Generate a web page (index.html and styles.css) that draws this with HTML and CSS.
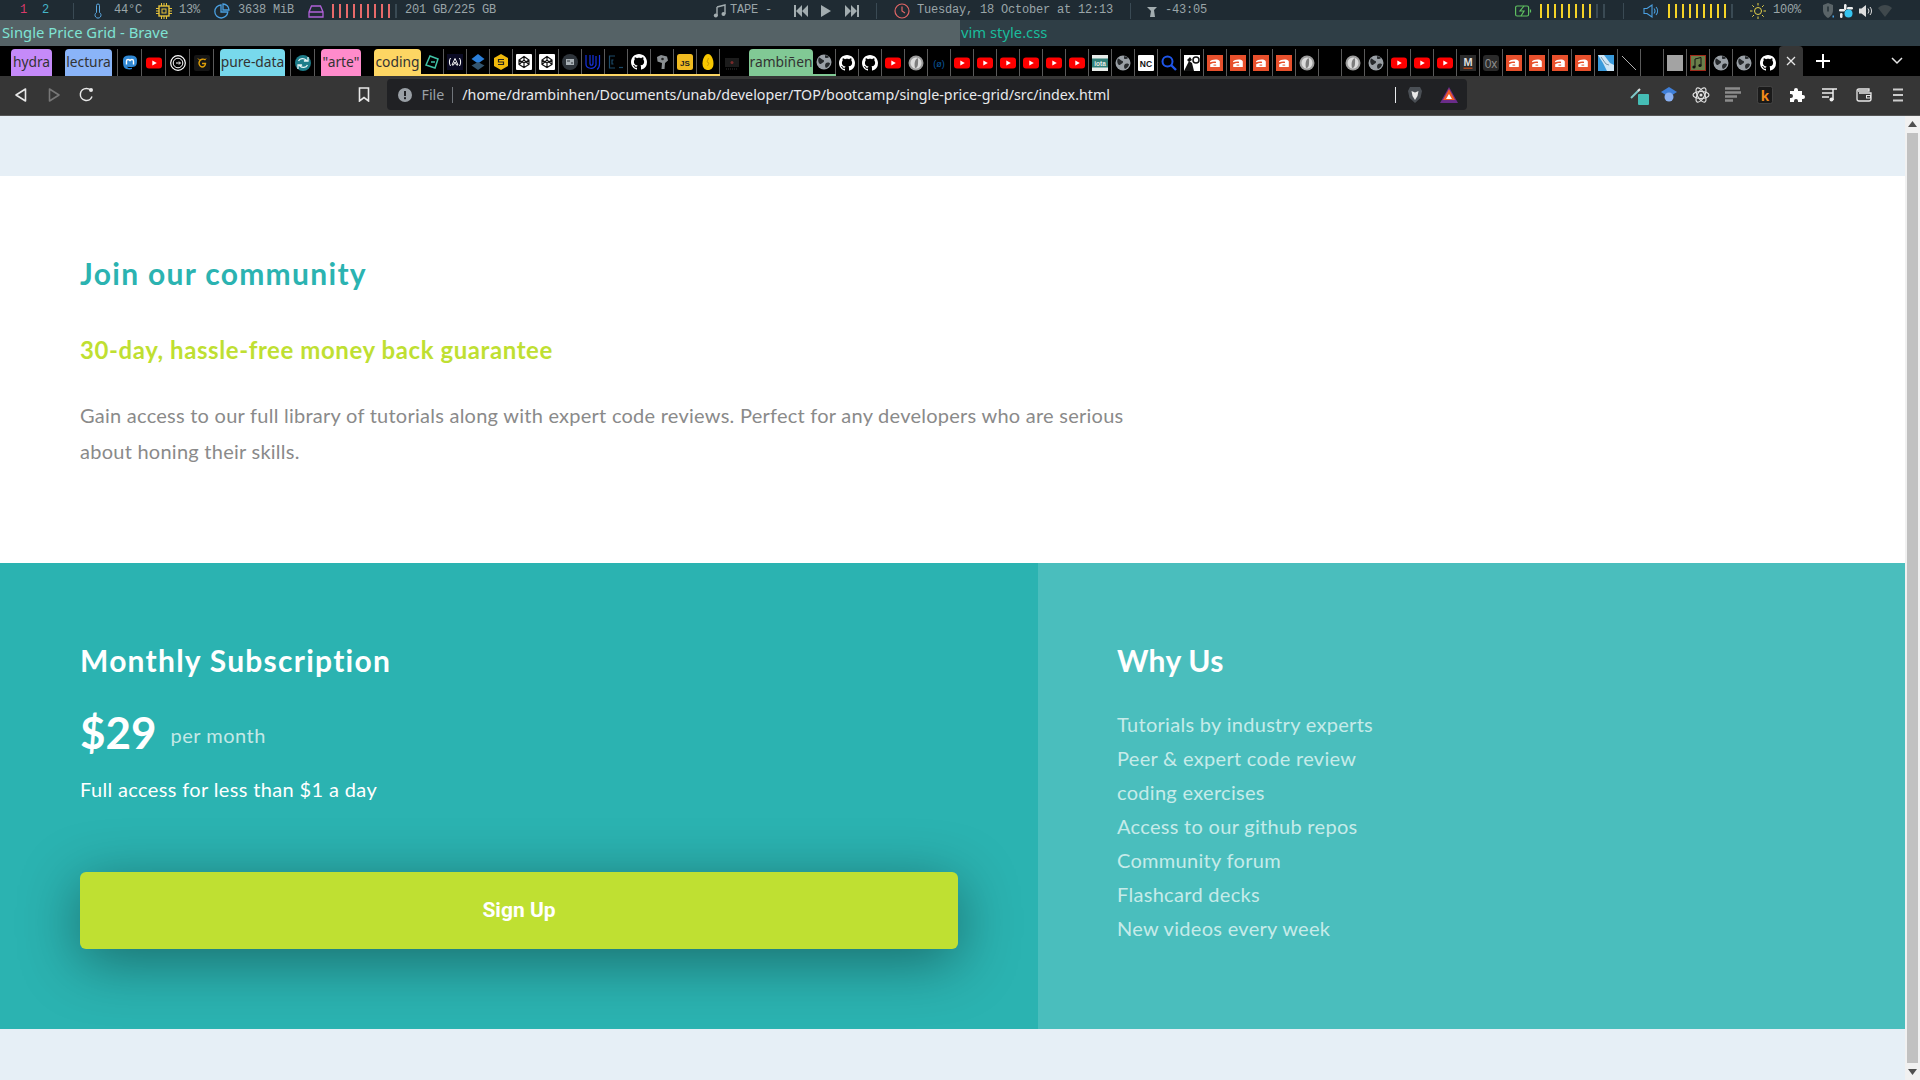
FILE: index.html
```html
<!DOCTYPE html>
<html>

<head>
    <meta charset="UTF-8">
    <title>Single Price Grid - Brave</title>
    <link rel="stylesheet" href="styles.css">
</head>

<body>

    <!-- icons used by the pinned tabs -->
    <svg class="defs" width="0" height="0">
        <symbol id="yt" viewBox="0 0 16 16"><rect y="2.5" width="16" height="11" rx="3" fill="#f00"/><path d="M6.3 5.5v5L10.8 8z" fill="#fff"/></symbol>
        <symbol id="gh" viewBox="0 0 16 16"><path fill="#fff" d="M8 0C3.58 0 0 3.58 0 8c0 3.54 2.29 6.53 5.47 7.59.4.07.55-.17.55-.38 0-.19-.01-.82-.01-1.49-2.01.37-2.53-.49-2.69-.94-.09-.23-.48-.94-.82-1.13-.28-.15-.68-.52-.01-.53.63-.01 1.08.58 1.23.82.72 1.21 1.87.87 2.33.66.07-.52.28-.87.51-1.07-1.78-.2-3.64-.89-3.64-3.95 0-.87.31-1.59.82-2.15-.08-.2-.36-1.02.08-2.12 0 0 .67-.21 2.2.82.64-.18 1.32-.27 2-.27.68 0 1.36.09 2 .27 1.53-1.04 2.2-.82 2.2-.82.44 1.1.16 1.92.08 2.12.51.56.82 1.27.82 2.15 0 3.07-1.87 3.75-3.65 3.95.29.25.54.73.54 1.48 0 1.07-.01 1.93-.01 2.2 0 .21.15.46.55.38A8.013 8.013 0 0016 8c0-4.42-3.58-8-8-8z"/></symbol>
        <symbol id="globe" viewBox="0 0 16 16"><circle cx="8" cy="8" r="7.5" fill="#9aa0a6"/><path d="M3 3.5c2 .5 2.500 2 4.500 2.500 1 .5.500 2-.5 2.500-1.500.5-2 2-3 1.500-1.500-1-2.500-4-1-6.500zM10 9c1.500-1 3.500-.5 4 .5-.5 2-2 3.500-4 4.500-1-1-1.500-3.500 0-5zM9 1.500c1.500-.5 3 .5 4 1.500-1 1-3 1.500-4 .5z" fill="#26292c"/></symbol>
        <symbol id="coin" viewBox="0 0 16 16"><circle cx="8" cy="8" r="7.500" fill="#9c9c9c"/><circle cx="8" cy="8" r="5.500" fill="#dcdcdc"/><path d="M9.500 3C7 4.500 6 8 7 13c2 0 3-2 3-4.500S10.500 4.500 9.500 3z" fill="#7d7d7d"/></symbol>
        <symbol id="brave-a" viewBox="0 0 16 16"><rect width="16" height="16" fill="#e8502c"/><path d="M3 6.500C4 4 12.500 3.500 12.800 6.500V12H3.200V9.300C5 8 7 7.800 9 8V6.700c-2-.3-4 0-6 .6z" fill="#fff"/><rect x="6.500" y="9.600" width="2.700" height="1" fill="#e8502c"/></symbol>
        <symbol id="codepen" viewBox="0 0 16 16"><rect width="16" height="16" rx="1" fill="#fff"/><path d="M8 2.500l5 3.500v4.500l-5 3-5-3V6zM3 6l5 3 5-3M8 2.500V6M8 9v4.500M3 10.500L8 6l5 4.500" fill="none" stroke="#111" stroke-width="1.200"/></symbol>
        <symbol id="blank-chip" viewBox="0 0 16 16"><rect x="1" y="3" width="14" height="9" fill="#1c1c1c"/><circle cx="8" cy="7.500" r="1.500" fill="#7a2a2a"/><path d="M2 14h12" stroke="#333" stroke-dasharray="1 1"/></symbol>
    </svg>

    <div class="statusbar">
        <div class="st-group st-left">
            <span class="ws ws-red">1</span>
            <span class="ws ws-blue">2</span>
            <i class="st-sep st-sep-left"></i>
            <span class="pair pair-temp">
                <svg width="10" height="16" viewBox="0 0 10 16"><path d="M3.500 9.500V2.500a1.500 1.500 0 013 0v7a3 3 0 11-3 0z" fill="none" stroke="#5aa7e0"/></svg>
                <span>44°C</span>
            </span>
            <span class="pair pair-cpu">
                <svg width="16" height="16" viewBox="0 0 16 16"><rect x="3" y="3" width="10" height="10" fill="none" stroke="#e5c23a" stroke-width="1.400"/><rect x="6" y="6" width="4" height="4" fill="none" stroke="#e5c23a"/><path d="M5.500 0v3M8 0v3M10.500 0v3M5.500 13v3M8 13v3M10.500 13v3M0 5.500h3M0 8h3M0 10.500h3M13 5.500h3M13 8h3M13 10.500h3" stroke="#e5c23a"/></svg>
                <span>13%</span>
            </span>
            <span class="pair pair-mem">
                <svg width="16" height="16" viewBox="0 0 16 16"><path d="M7 2a6.500 6.500 0 106.800 7H7z" fill="none" stroke="#4a9fe0" stroke-width="1.300"/><path d="M9 1a6 6 0 016 6H9z" fill="none" stroke="#4a9fe0" stroke-width="1.300"/></svg>
                <span>3638 MiB</span>
            </span>
            <span class="pair pair-disk">
                <svg width="16" height="14" viewBox="0 0 16 14"><path d="M1 8l2.500-6h9L15 8v5H1zM1 8h14" fill="none" stroke="#b061d8" stroke-width="1.300"/></svg>
                <span class="bars bars-disk"><i></i><i></i><i></i><i></i><i></i><i></i><i></i><i></i><i></i><i class="off"></i></span>
                <span class="disk-label">201 GB/225 GB</span>
            </span>
        </div>
        <div class="st-group st-mid">
            <svg width="14" height="14" viewBox="0 0 14 14"><path d="M4 3l8-2v9M4 3v9" stroke="#a3adb0" stroke-width="1.400" fill="none"/><circle cx="2.800" cy="11.500" r="2" fill="#a3adb0"/><circle cx="10.500" cy="10" r="2" fill="#a3adb0"/></svg>
            <span class="tape">TAPE -</span>
            <svg class="ctrl-prev" width="14" height="12" viewBox="0 0 14 12"><path d="M0 0h2v12H0zM8 0v12L2 6zM14 0v12L8 6z" fill="#a3adb0"/></svg>
            <svg class="ctrl-play" width="12" height="12" viewBox="0 0 12 12"><path d="M1 0v12l10-6z" fill="#a3adb0"/></svg>
            <svg class="ctrl-next" width="14" height="12" viewBox="0 0 14 12"><path d="M14 0h-2v12h2zM6 0v12l6-6zM0 0v12l6-6z" fill="#a3adb0"/></svg>
            <i class="st-sep st-sep-a"></i>
            <svg class="clock" width="16" height="16" viewBox="0 0 16 16"><circle cx="8" cy="8" r="7" fill="none" stroke="#e06666" stroke-width="1.200"/><path d="M8 3.500V8l3 2" fill="none" stroke="#e06666" stroke-width="1.200"/></svg>
            <span class="date">Tuesday, 18 October at 12:13</span>
            <i class="st-sep st-sep-b"></i>
            <svg class="palm" width="10" height="12" viewBox="0 0 10 12"><path d="M0 2h10L7 5l1 7H3l1-6z" fill="#a3adb0"/></svg>
            <span class="timer">-43:05</span>
        </div>
        <div class="st-group st-right">
            <svg class="batt" width="17" height="12" viewBox="0 0 17 12"><rect x=".6" y="1" width="13" height="10" rx="1.500" fill="none" stroke="#5fbf60" stroke-width="1.200"/><path d="M9 1L5 6h4L6 11M15.500 4.500v3" fill="none" stroke="#5fbf60" stroke-width="1.200"/></svg>
            <span class="bars bars-batt"><i></i><i></i><i></i><i></i><i></i><i></i><i></i><i></i><i class="off"></i><i class="off"></i></span>
            <i class="st-sep st-sep-c"></i>
            <svg class="speaker" width="15" height="14" viewBox="0 0 15 14"><path d="M1 4.500h3L9 1v12L4 9.500H1zM11 4.500a4 4 0 010 5M13 3a6 6 0 010 8" fill="none" stroke="#4a9fe0" stroke-width="1.100"/></svg>
            <span class="bars bars-vol"><i></i><i></i><i></i><i></i><i></i><i></i><i></i><i></i><i></i><i class="off"></i></span>
            <svg class="sun" width="16" height="16" viewBox="0 0 16 16"><circle cx="8" cy="8" r="3.500" fill="none" stroke="#e5d24a"/><path d="M8 0v2.500M8 13.500V16M0 8h2.500M13.500 8H16M2.300 2.300L4 4M12 12l1.700 1.700M2.300 13.700L4 12M12 4l1.700-1.700" stroke="#e5d24a"/></svg>
            <span class="bright">100%</span>
            <div class="tray">
                <svg width="12" height="15" viewBox="0 0 12 15"><path d="M6 0l5 2v5c0 4-2.500 6.500-5 8-2.500-1.500-5-4-5-8V2z" fill="#5a6468"/><rect x="5.300" y="3.500" width="1.400" height="5" fill="#1f2b33"/><rect x="10.500" y="12.500" width="2" height="2" fill="#4a9fe0"/></svg>
                <svg width="14" height="14" viewBox="0 0 14 14"><rect x="0" y="5" width="6" height="2.500" rx="1.200" fill="#eee"/><rect x="5" y="0" width="2.500" height="6" rx="1.200" fill="#eee"/><rect x="8" y="3" width="6" height="2.500" rx="1.200" fill="#eee"/><circle cx="9.500" cy="9.500" r="4" fill="#36c5f0"/><rect x="1" y="9" width="2.500" height="5" rx="1.200" fill="#eee"/></svg>
                <svg width="15" height="14" viewBox="0 0 15 14"><path d="M1 4.500h2.500L8 1v12L3.500 9.500H1z" fill="#ddd"/><path d="M10 4.500a4 4 0 010 5M12 3a6 6 0 010 8" fill="none" stroke="#ddd"/></svg>
                <svg width="14" height="12" viewBox="0 0 14 12"><path d="M0 3c4-4 10-4 14 0L7 12z" fill="#3f484c"/></svg>
            </div>
        </div>
    </div>

    <div class="titlebar">
        <div class="title title-active">Single Price Grid - Brave</div>
        <div class="title title-other">vim style.css</div>
    </div>

    <div class="tabstrip">
        <div class="chip chip-hydra">hydra</div>
        <div class="chip chip-lectura">lectura</div>
        <div class="tab tab-wide tab-sep-left"><svg viewBox="0 0 16 16"><path d="M15 5c0-3-2-4-3.500-4.300C10 .4 6 .4 4.500.7 3 1 1 2 1 5c0 4 0 8 3.500 9 2 .6 4.500.5 5.500 0v-1.300c-2 .5-4.500.4-5-1 3 .7 7 .5 8.500-.7 1.300-1 1.500-3 1.500-6z" fill="#3088d4"/><path d="M4.500 9.500V6c0-2 3-2 3.500 0 .5-2 3.500-2 3.500 0v3.500" fill="none" stroke="#fff" stroke-width="1.400"/></svg></div>
        <div class="tab tab-wide"><svg><use href="#yt"/></svg></div>
        <div class="tab tab-wide"><svg viewBox="0 0 16 16"><circle cx="8" cy="8" r="7.300" fill="none" stroke="#fff" stroke-width="1.200"/><circle cx="8" cy="8" r="4.800" fill="none" stroke="#fff"/><path d="M6 8h4M9 6.500L10.500 8 9 9.500" fill="none" stroke="#fff"/></svg></div>
        <div class="tab tab-wide"><svg viewBox="0 0 16 16"><rect width="16" height="16" rx="2" fill="#161616"/><path d="M11.500 5A4 4 0 108 12a3.500 3.500 0 003.500-3.500H8" fill="none" stroke="#e0a008" stroke-width="1.400"/><path d="M4 3.500l1.500 1.500M12 3.500L10.500 5" stroke="#e0a008"/></svg></div>
        <div class="chip chip-pure">pure-data</div>
        <div class="tab tab-wide tab-sep-left"><svg viewBox="0 0 16 16"><circle cx="8" cy="8" r="8" fill="#1d7d8a"/><path d="M3.500 6C5 3 9 3 11 5L9 6h4V2M12.500 10C11 13 7 13 5 11l2-1H3v4" fill="none" stroke="#e6f4f5" stroke-width="1.300"/></svg></div>
        <div class="chip chip-arte">"arte"</div>

        <div class="group group-coding">
            <div class="chip chip-coding">coding</div>
            <div class="tab"><svg viewBox="0 0 16 16"><path d="M6 2l8 3-3 9-9-3zM11 8H7" fill="none" stroke="#3fc1a5" stroke-width="1.500"/></svg></div>
            <div class="tab"><svg viewBox="0 0 16 16"><rect width="16" height="16" fill="#0a0a23"/><path d="M8 4.500L5 11h1.500L8 8l1.500 3H11zM3.500 4C2 6.500 2 9.500 3.500 12M12.500 4c1.500 2.500 1.500 5.500 0 8" fill="none" stroke="#fff"/></svg></div>
            <div class="tab"><svg viewBox="0 0 16 16"><path d="M8 0l6.500 5L8 9.500 1.500 5z" fill="#2b7fd9"/><path d="M8 8l6.500 3.500L8 16l-6.500-4.500z" fill="#33556f"/></svg></div>
            <div class="tab"><svg viewBox="0 0 16 16"><path d="M8 0l7 4v8l-7 4-7-4V4z" fill="#f0b90b"/><path d="M11 5.500H5.500v2.500h5v2.500H5" fill="none" stroke="#222" stroke-width="1.200"/></svg></div>
            <div class="tab"><svg><use href="#codepen"/></svg></div>
            <div class="tab"><svg><use href="#codepen"/></svg></div>
            <div class="tab"><svg viewBox="0 0 16 16"><circle cx="8" cy="8" r="8" fill="#2e343a"/><rect x="4" y="5" width="8" height="6" fill="#a9b1b6"/><path d="M5 7h3M9 9h2" stroke="#2e343a"/></svg></div>
            <div class="tab"><svg viewBox="0 0 16 16"><path d="M1 1v9c0 5 8 6 10 1V2M5 1v8c0 3 3 3 3 0V1M14.500 1v9c0 3-1 4.500-2.500 5.500" fill="none" stroke="#1733e0" stroke-width="1.200"/></svg></div>
            <div class="tab"><svg viewBox="0 0 16 16"><path d="M7 2H1.500v12H7M5.500 6H4v4h1.500" fill="none" stroke="#1c4a68" stroke-width="1.200"/><path d="M11 13.500h4" stroke="#1c4a68" stroke-width="1.200"/></svg></div>
            <div class="tab"><svg><use href="#gh"/></svg></div>
            <div class="tab"><svg viewBox="0 0 16 16"><path d="M3 3l4-2 6 1.500 1 4-3 2.500-.5 6H7.500L8 9 3.500 7.500z" fill="#8a8f92"/><circle cx="8.500" cy="5" r="1.300" fill="#222"/></svg></div>
            <div class="tab"><svg viewBox="0 0 16 16"><rect width="16" height="16" rx="2.500" fill="#f0bb20"/><text x="8" y="12" class="icon-text js">JS</text></svg></div>
            <div class="tab"><svg viewBox="0 0 16 16"><path d="M8 0c3 0 5.500 5 5.500 9.500S11 16 8 16s-5.500-2-5.500-6.500S5 0 8 0z" fill="#f7c600"/><path d="M8.500 4L7 8l2 1-1.500 3" fill="none" stroke="#b88a00" stroke-width=".7"/></svg></div>
        </div>

        <div class="tab tab-chipslot"><svg><use href="#blank-chip"/></svg></div>

        <div class="group group-rambi">
            <div class="chip chip-rambi">rambiñen</div>
            <div class="tab"><svg><use href="#globe"/></svg></div>
        </div>

        <div class="tab"><svg><use href="#gh"/></svg></div>
        <div class="tab"><svg><use href="#gh"/></svg></div>
        <div class="tab"><svg><use href="#yt"/></svg></div>
        <div class="tab"><svg><use href="#coin"/></svg></div>
        <div class="tab"><svg viewBox="0 0 16 16"><text x="8" y="11.500" class="icon-text zero">(ø)</text></svg></div>
        <div class="tab"><svg><use href="#yt"/></svg></div>
        <div class="tab"><svg><use href="#yt"/></svg></div>
        <div class="tab"><svg><use href="#yt"/></svg></div>
        <div class="tab"><svg><use href="#yt"/></svg></div>
        <div class="tab"><svg><use href="#yt"/></svg></div>
        <div class="tab"><svg><use href="#yt"/></svg></div>
        <div class="tab"><svg viewBox="0 0 16 16"><rect width="16" height="16" fill="#e8ece9"/><rect y="3.500" width="16" height="9" fill="#2f7f78"/><text x="8" y="10.800" class="icon-text iota">iota</text></svg></div>
        <div class="tab"><svg><use href="#globe"/></svg></div>
        <div class="tab"><svg viewBox="0 0 16 16"><rect width="16" height="16" rx="1" fill="#fff"/><text x="8" y="11.500" class="icon-text nc">NC</text></svg></div>
        <div class="tab"><svg viewBox="0 0 16 16"><circle cx="6.500" cy="6.500" r="5" fill="none" stroke="#1f55e8" stroke-width="2"/><path d="M10 10l5 5" stroke="#1f55e8" stroke-width="2.400"/></svg></div>
        <div class="tab"><svg viewBox="0 0 16 16"><rect width="16" height="16" fill="#fff"/><path d="M0 16L5 6l3 2 2 8zM3 5l3-3 2 3-3 2z" fill="#111"/><circle cx="12" cy="5" r="3" fill="none" stroke="#111" stroke-width="1.500"/></svg></div>
        <div class="tab"><svg><use href="#brave-a"/></svg></div>
        <div class="tab"><svg><use href="#brave-a"/></svg></div>
        <div class="tab"><svg><use href="#brave-a"/></svg></div>
        <div class="tab"><svg><use href="#brave-a"/></svg></div>
        <div class="tab"><svg><use href="#coin"/></svg></div>
        <div class="tab"></div>
        <div class="tab"><svg><use href="#coin"/></svg></div>
        <div class="tab"><svg><use href="#globe"/></svg></div>
        <div class="tab"><svg><use href="#yt"/></svg></div>
        <div class="tab"><svg><use href="#yt"/></svg></div>
        <div class="tab"><svg><use href="#yt"/></svg></div>
        <div class="tab"><svg viewBox="0 0 16 16"><rect width="16" height="16" fill="#2b2b2b"/><text x="8" y="11" class="icon-text em">M</text><rect x="3.500" y="12.500" width="9" height="1.500" fill="#a8441c"/></svg></div>
        <div class="tab"><svg viewBox="0 0 16 16"><rect width="16" height="16" rx="3" fill="#2a2a2a"/><text x="8" y="12.500" class="icon-text ox">0x</text></svg></div>
        <div class="tab"><svg><use href="#brave-a"/></svg></div>
        <div class="tab"><svg><use href="#brave-a"/></svg></div>
        <div class="tab"><svg><use href="#brave-a"/></svg></div>
        <div class="tab"><svg><use href="#brave-a"/></svg></div>
        <div class="tab"><svg viewBox="0 0 16 16"><rect width="16" height="16" fill="#3a9bdc"/><path d="M0 0h6l6 8 4 2v6H9L5 8z" fill="#cfe6f5"/><path d="M3 2l5 7 3 1" fill="none" stroke="#7a96aa"/></svg></div>
        <div class="tab"><svg viewBox="0 0 16 16"><path d="M1 1l14 14" stroke="#ddd" stroke-width=".8"/></svg></div>
        <div class="tab"></div>
        <div class="tab"><svg viewBox="0 0 16 16"><rect width="16" height="16" fill="#a3a3a3"/></svg></div>
        <div class="tab"><svg viewBox="0 0 16 16"><rect x=".5" y=".5" width="15" height="15" fill="#6a7f4a" stroke="#a02a1a"/><path d="M5 4l6-1.500v8M5 4v8" fill="none" stroke="#111"/><circle cx="4" cy="12" r="1.600" fill="#111"/><circle cx="10" cy="10.500" r="1.600" fill="#111"/></svg></div>
        <div class="tab"><svg><use href="#globe"/></svg></div>
        <div class="tab"><svg><use href="#globe"/></svg></div>
        <div class="tab tab-last"><svg><use href="#gh"/></svg></div>
        <div class="tab-active"><svg width="10" height="10" viewBox="0 0 10 10"><path d="M1 1l8 8M9 1L1 9" stroke="#e6e6e6" stroke-width="1.300"/></svg></div>
        <svg class="newtab" width="14" height="14" viewBox="0 0 14 14"><path d="M7 0v14M0 7h14" stroke="#fff" stroke-width="2"/></svg>
        <svg class="tabsmenu" width="12" height="8" viewBox="0 0 12 8"><path d="M1 1l5 5 5-5" fill="none" stroke="#e6e6e6" stroke-width="1.500"/></svg>
    </div>

    <div class="toolbar">
        <div class="tool tool-nav"><svg width="14" height="16" viewBox="0 0 14 16"><path d="M11.500 2v12L2 8z" fill="none" stroke="#e8e8e8" stroke-width="1.600" stroke-linejoin="round"/></svg></div>
        <div class="tool tool-nav"><svg width="14" height="16" viewBox="0 0 14 16"><path d="M2.500 2v12L12 8z" fill="none" stroke="#777" stroke-width="1.600" stroke-linejoin="round"/></svg></div>
        <div class="tool tool-nav"><svg width="15" height="15" viewBox="0 0 15 15"><path d="M13 9.500A6 6 0 117.500 1.500a6 6 0 014 1.500" fill="none" stroke="#e8e8e8" stroke-width="1.500"/><circle cx="12" cy="3" r="2" fill="#e8e8e8"/></svg></div>
        <div class="tool tool-bookmark"><svg width="12" height="15" viewBox="0 0 12 15"><path d="M1.500 1h9v13L6 10.500 1.500 14z" fill="none" stroke="#e8e8e8" stroke-width="1.600"/></svg></div>

        <div class="urlbox">
            <svg class="url-info" width="14" height="14" viewBox="0 0 14 14"><circle cx="7" cy="7" r="7" fill="#9aa0a6"/><rect x="6" y="3" width="2" height="5" fill="#202124"/><rect x="6" y="9.200" width="2" height="2" fill="#202124"/></svg>
            <span class="url-scheme">File</span>
            <i class="url-sep"></i>
            <span class="url-text">/home/drambinhen/Documents/unab/developer/TOP/bootcamp/single-price-grid/src/index.html</span>
            <i class="url-sep url-sep-end"></i>
            <svg class="url-lion" width="16" height="18" viewBox="0 0 16 18"><path d="M3 1h10l2 4-1.500 7L8 17l-5.500-5L1 5z" fill="#4a4f55"/><path d="M4.500 5L8 6.500 11.500 5 10.500 10 8 14 5.500 10z" fill="#e8e8e8"/></svg>
            <svg class="url-bat" width="18" height="16" viewBox="0 0 18 16"><path d="M9 0l9 16H0z" fill="#6a2c8a"/><path d="M9 2l6 11H3z" fill="#f05a28"/><path d="M9 7l3 5H6z" fill="#fff"/></svg>
        </div>

        <div class="tools-right">
            <div class="tool tool-ext tool-ext-first"><svg width="20" height="20" viewBox="0 0 20 20"><path d="M1 13l8-8" stroke="#7fc8c8" stroke-width="2"/><path d="M8 6l2-2" stroke="#ddd" stroke-width="2"/><rect x="8" y="9" width="11" height="11" rx="1" fill="#45bdb5"/></svg></div>
            <div class="tool tool-ext"><svg width="18" height="18" viewBox="0 0 18 18"><path d="M9 1l8 5-8 5-8-5z" fill="#3f7fd8"/><circle cx="9" cy="11" r="4.500" fill="#8ab0f0"/></svg></div>
            <div class="tool tool-ext"><svg width="18" height="18" viewBox="0 0 18 18"><g fill="none" stroke="#e0e0e0" stroke-width="1.200"><ellipse cx="9" cy="9" rx="8" ry="3.500"/><ellipse cx="9" cy="9" rx="8" ry="3.500" transform="rotate(60 9 9)"/><ellipse cx="9" cy="9" rx="8" ry="3.500" transform="rotate(120 9 9)"/></g><circle cx="9" cy="9" r="1.500" fill="#e0e0e0"/></svg></div>
            <div class="tool tool-ext"><svg width="16" height="16" viewBox="0 0 16 16"><path d="M0 1.500h15M0 5.500h16M0 9.500h12M0 13.500h8" stroke="#8c8c8c" stroke-width="2.500"/></svg></div>
            <div class="tool tool-ext"><svg width="16" height="18" viewBox="0 0 16 18"><rect x=".5" y=".5" width="15" height="17" rx="2" fill="#1a1a1a" stroke="#444"/><text x="8" y="14.500" class="icon-text kay">k</text></svg></div>
            <div class="tool tool-ext"><svg width="16" height="16" viewBox="0 0 16 16"><path d="M1 4h4V3a2 2 0 014 0v1h4v4h1a2 2 0 010 4h-1v3H9v-1a2 2 0 00-4 0v1H1v-4h1a2 2 0 000-4H1z" fill="#fff"/></svg></div>
            <div class="tool tool-ext tool-ext-wide"><svg width="16" height="14" viewBox="0 0 16 14"><path d="M0 1h11M0 5h11M0 9h7M11 12V1h4" fill="none" stroke="#eee" stroke-width="1.500"/><circle cx="9.500" cy="11.500" r="2" fill="#eee"/></svg></div>
            <div class="tool tool-ext tool-ext-wide"><svg width="16" height="14" viewBox="0 0 16 14"><path d="M2 3h11v-2H3a2 2 0 00-2 2v8a2 2 0 002 2h10a2 2 0 002-2V5H3" fill="none" stroke="#e8e8e8" stroke-width="1.300"/><rect x="10.500" y="7.500" width="4" height="2.500" fill="none" stroke="#e8e8e8"/></svg></div>
            <div class="tool tool-ext tool-ext-wide"><svg width="12" height="14" viewBox="0 0 12 14"><path d="M1 1.500h10M1 7h10M1 12.500h10" stroke="#ccc" stroke-width="2"/></svg></div>
        </div>
    </div>

    <div class="viewport">
        <main class="page">
            <section class="card">
                <div class="intro">
                    <h1>Join our community</h1>
                    <h2>30-day, hassle-free money back guarantee</h2>
                    <p>Gain access to our full library of tutorials along with expert code reviews. Perfect for any developers who are serious about honing their skills.</p>
                </div>
                <div class="bottom">
                    <div class="subscribe">
                        <h3>Monthly Subscription</h3>
                        <div class="price"><strong>$29</strong><span>per month</span></div>
                        <p class="access">Full access for less than $1 a day</p>
                        <div class="signup">Sign Up</div>
                    </div>
                    <div class="why">
                        <h3>Why Us</h3>
                        <ul>
                            <li>Tutorials by industry experts</li>
                            <li>Peer &amp; expert code review</li>
                            <li>coding exercises</li>
                            <li>Access to our github repos</li>
                            <li>Community forum</li>
                            <li>Flashcard decks</li>
                            <li>New videos every week</li>
                        </ul>
                    </div>
                </div>
            </section>
        </main>
        <div class="scrollbar">
            <svg width="9" height="6" viewBox="0 0 9 6"><path d="M4.500 0L9 6H0z" fill="#505050"/></svg>
            <div class="thumb"></div>
            <svg width="9" height="6" viewBox="0 0 9 6"><path d="M0 0h9L4.500 6z" fill="#505050"/></svg>
        </div>
    </div>

</body>

</html>
```

FILE: styles.css
```css
* {
    margin: 0;
    padding: 0;
    box-sizing: border-box;
}

html,
body {
    height: 100%;
    overflow: hidden;
}

body {
    display: flex;
    flex-direction: column;
    font-family: "Lato", "Noto Sans", sans-serif;
    background-color: #000;
}

i {
    display: block;
}

.defs {
    display: block;
    flex: none;
    height: 0;
}

/* status bar */
.statusbar {
    display: grid;
    flex: none;
    grid-template-columns: 713px 797px 1fr;
    height: 20px;
    padding-top: 1px;
    background-color: #1f2b33;
    color: #9aa5a8;
    font: 12px/19px "Liberation Mono", monospace;
    letter-spacing: -0.2px;
}

.st-group {
    display: flex;
    align-items: center;
    white-space: nowrap;
}

.st-group svg {
    flex: none;
}

.st-left {
    padding-left: 20px;
}

.ws {
    width: 22px;
}

.ws-red {
    color: #d83a6a;
}

.ws-blue {
    color: #45b5c8;
}

.st-sep {
    width: 1px;
    height: 16px;
    background-color: #3a4a54;
}

.st-sep-left {
    margin-left: 9px;
}

.pair {
    display: flex;
    align-items: center;
    gap: 7px;
}

.pair-temp {
    margin-left: 19px;
    gap: 11px;
}

.pair-cpu {
    margin-left: 14px;
}

.pair-mem {
    margin-left: 14px;
    gap: 8px;
}

.pair-disk {
    margin-left: 14px;
    gap: 8px;
}

.bars {
    display: flex;
    gap: 5px;
}

.bars i {
    width: 2px;
    height: 14px;
    background-color: #f5d327;
}

.bars .off {
    background-color: #3a4a54;
}

.bars-disk i {
    background-color: #e86a6a;
}

.tape {
    margin-left: 3px;
}

.ctrl-prev {
    margin-left: 22px;
}

.ctrl-play {
    margin-left: 12px;
}

.ctrl-next {
    margin-left: 13px;
}

.st-sep-a {
    margin-left: 17px;
}

.clock {
    margin-left: 17px;
}

.date {
    margin-left: 7px;
}

.st-sep-b {
    margin-left: 17px;
}

.palm {
    margin-left: 16px;
}

.timer {
    margin-left: 8px;
}

.batt {
    margin-left: 5px;
}

.bars-batt {
    margin-left: 8px;
}

.st-sep-c {
    margin-left: 18px;
}

.speaker {
    margin-left: 19px;
}

.bars-vol {
    margin-left: 10px;
}

.sun {
    margin-left: 17px;
}

.bright {
    margin-left: 7px;
}

.tray {
    display: flex;
    align-items: center;
    gap: 5px;
    margin-left: 21px;
}

/* window titles */
.titlebar {
    display: flex;
    flex: none;
    height: 26px;
    font: 14.8px/25px "Noto Sans", sans-serif;
}

.title {
    width: 50%;
}

.title-active {
    padding-left: 2px;
    background-color: #556266;
    color: #7fe3d4;
}

.title-other {
    padding-left: 1px;
    background-color: #2f3e46;
    color: #1abc9c;
}

/* tabs */
.tabstrip {
    display: flex;
    flex: none;
    align-items: flex-end;
    height: 30px;
    padding-left: 11px;
    background-color: #000;
}

.chip {
    height: 27px;
    padding-top: 2px;
    border-radius: 4px 4px 0 0;
    color: #333;
    font: 13.8px/22px "Noto Sans", sans-serif;
    text-align: center;
    white-space: nowrap;
}

.chip-hydra {
    width: 41px;
    background-color: #c58af9;
}

.chip-lectura {
    width: 47px;
    margin-left: 13px;
    margin-right: 6px;
    background-color: #8ab4f8;
}

.chip-pure {
    width: 65px;
    margin-left: 6px;
    margin-right: 6px;
    background-color: #78d9ec;
}

.chip-arte {
    width: 40px;
    margin-left: 6px;
    background-color: #ff8bcb;
}

.chip-coding {
    width: 47px;
    background-color: #fdd663;
}

.chip-rambi {
    width: 64px;
    background-color: #81c995;
}

.group {
    display: flex;
    align-items: flex-end;
    height: 27px;
    border-bottom: 2px solid;
}

.group .chip {
    height: 27px;
    margin-bottom: -2px;
}

.group .tab {
    height: 25px;
}

.group-coding {
    margin-left: 13px;
    border-color: #fdd663;
}

.group-rambi {
    margin-left: 6px;
    border-color: #81c995;
}

.tab {
    display: flex;
    flex: none;
    align-items: center;
    justify-content: center;
    width: 23px;
    height: 27px;
    border-right: 1px solid #5a5a5a;
}

.tab svg {
    display: block;
    width: 16px;
    height: 16px;
}

.tab-sep-left {
    box-shadow: -1px 0 0 #5a5a5a;
}

.tab-wide {
    width: 24px;
}

.tab-chipslot {
    border-right: 0;
}

.tab-last {
    border-right: 0;
}

.icon-text {
    font-family: "Liberation Sans", sans-serif;
    font-weight: bold;
    text-anchor: middle;
}

.js {
    font-size: 8px;
    fill: #222;
}

.zero {
    font-size: 9px;
    font-weight: normal;
    fill: #0a5aa0;
}

.iota {
    font-size: 6.500px;
    fill: #e8ece9;
}

.nc {
    font-size: 8.500px;
    fill: #111;
}

.em {
    font-size: 11px;
    fill: #ddd;
}

.ox {
    font-size: 12px;
    font-weight: normal;
    fill: #8e8e8e;
}

.kay {
    font-size: 15px;
    fill: #f28c1a;
}

.tab-active {
    display: flex;
    flex: none;
    align-items: center;
    justify-content: center;
    width: 24px;
    height: 30px;
    border-radius: 4px 4px 0 0;
    background-color: #363636;
}

.newtab {
    align-self: center;
    margin-left: 13px;
}

.tabsmenu {
    align-self: center;
    margin-left: 61px;
}

/* toolbar */
.toolbar {
    display: flex;
    flex: none;
    align-items: center;
    height: 40px;
    padding-left: 5px;
    padding-bottom: 2px;
    border-bottom: 1px solid #555;
    background-color: #363636;
}

.tool {
    display: flex;
    flex: none;
    align-items: center;
    justify-content: center;
}

.tool-nav {
    width: 32.500px;
}

.tool-bookmark {
    width: 32px;
    margin-left: 245px;
}

.urlbox {
    display: flex;
    flex: none;
    align-items: center;
    width: 1080px;
    height: 31px;
    margin-left: 7px;
    padding-left: 11px;
    border-radius: 4px;
    background-color: #202124;
    color: #e8eaed;
    font: 14.25px "Noto Sans", sans-serif;
}

.url-scheme {
    margin-left: 10px;
    color: #9aa0a6;
}

.url-sep {
    width: 1px;
    height: 16px;
    margin-left: 8px;
    background-color: #70757a;
}

.url-text {
    width: 933px;
    margin-left: 9px;
    white-space: nowrap;
}

.url-sep-end {
    height: 16px;
    margin-left: 0;
    background-color: #e8eaed;
}

.url-lion {
    margin-left: 11px;
}

.url-bat {
    margin-left: 17px;
}

.tools-right {
    display: flex;
    margin-left: auto;
    padding-right: 5px;
}

.tool-ext {
    width: 32px;
}

.tool-ext-first {
    width: 26px;
}

.tool-ext-wide {
    width: 34px;
}

/* page */
.viewport {
    display: flex;
    flex: 1;
    min-height: 0;
}

.page {
    flex: 1;
    padding-top: 60px;
    overflow: hidden;
    background-color: #e6eff6;
}

.card {
    background-color: #fff;
}

.intro {
    height: 387px;
    padding: 77px 80px 0;
}

.intro h1 {
    color: #2bb3b1;
    font-size: 30px;
    font-weight: 700;
    line-height: 40px;
    letter-spacing: 1.3px;
}

.intro h2 {
    margin-top: 41px;
    color: #bfdf32;
    font-size: 24px;
    font-weight: 700;
    line-height: 32px;
    letter-spacing: 0.58px;
}

.intro p {
    width: 1070px;
    margin-top: 31px;
    color: #8a8a8a;
    font-size: 20px;
    line-height: 36px;
    letter-spacing: 0.25px;
}

.bottom {
    display: grid;
    grid-template-columns: 1038px 1fr;
    height: 466px;
    color: #fff;
}

.subscribe {
    padding: 77px 80px 0;
    background-color: #2bb3b1;
}

.why {
    padding: 77px 0 0 79px;
    background-color: #4abebd;
}

.bottom h3 {
    font-size: 30px;
    font-weight: 700;
    line-height: 40px;
    letter-spacing: 1.25px;
}

.why h3 {
    letter-spacing: 0.3px;
}

.price {
    display: flex;
    align-items: center;
    gap: 14px;
    margin-top: 27px;
}

.price strong {
    font-size: 44px;
    line-height: 50px;
}

.price span {
    margin-top: 5px;
    color: #c4e8e6;
    font-size: 20px;
    letter-spacing: 0.5px;
}

.access {
    margin-top: 18px;
    font-size: 20px;
    line-height: 28px;
    letter-spacing: 0.36px;
}

.signup {
    width: 878px;
    height: 77px;
    margin-top: 69px;
    border-radius: 6px;
    background-color: #bfe032;
    box-shadow: 0 12px 60px rgba(0, 0, 0, 0.4);
    font: 700 21px/77px "Roboto", sans-serif;
    text-align: center;
}

.why ul {
    margin-top: 27px;
    list-style: none;
    color: #c6ebe9;
    font-size: 20px;
    line-height: 34px;
    letter-spacing: 0.3px;
}

/* scrollbar */
.scrollbar {
    display: flex;
    flex: none;
    flex-direction: column;
    align-items: center;
    justify-content: space-between;
    width: 15px;
    padding: 5px 0;
    background-color: #f1f1f1;
}

.thumb {
    width: 11px;
    height: 930px;
    background-color: #c1c1c1;
}
```
